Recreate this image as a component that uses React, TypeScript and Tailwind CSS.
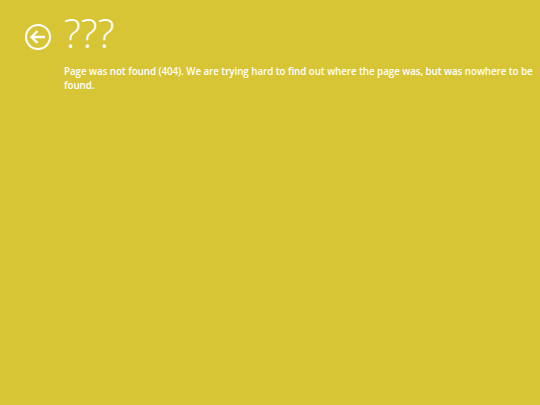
const App = () => {
  return (
    <div className="h-[405px] w-[540px] overflow-hidden bg-[#d8c535] font-['Open_Sans',sans-serif] text-white">
      <div className="flex items-start pt-[6px] pl-[25px]">
        <button className="mt-[18px] mr-[13px] flex h-[26px] w-[26px] shrink-0 items-center justify-center">
          <svg viewBox="0 0 26 26" className="h-[26px] w-[26px]" fill="none" stroke="currentColor">
            <circle cx="13" cy="13" r="12" strokeWidth="2" />
            <path d="M6.5 13H20M12.5 7L6.5 13L12.5 19" strokeWidth="2.4" />
          </svg>
        </button>
        <div>
          <h1 className="text-[40px] leading-[54px] font-light">???</h1>
          <p className="mt-[5px] w-[477px] text-[9.8px] leading-[14px] font-semibold tracking-[-0.06px]">
            Page was not found (404). We are trying hard to find out where the page was, but was nowhere to be found.
          </p>
        </div>
      </div>
    </div>
  );
};

export default App;
